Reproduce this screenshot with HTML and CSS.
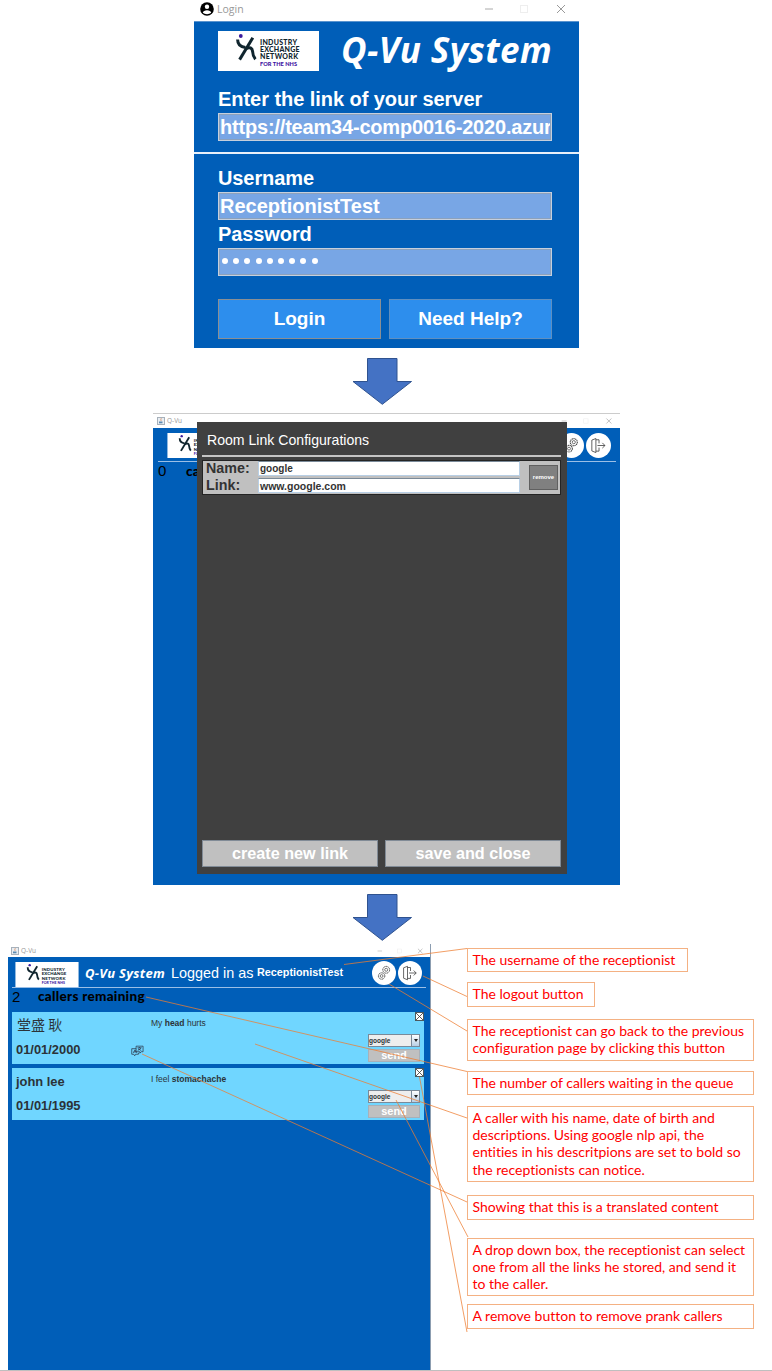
FILE: index.html
```html
<!DOCTYPE html>
<html lang="en">
<head>
<meta charset="utf-8">
<title>Q-Vu System</title>
<link rel="stylesheet" href="styles.css">
</head>
<body>
<svg class="defs" width="0" height="0">
  <symbol id="logo" viewBox="0 0 101 40">
    <rect width="101" height="40" fill="#fff"/>
    <circle cx="22.8" cy="5" r="1.9" fill="#3b1a9c"/>
    <g fill="none" stroke="#10252e" stroke-width="3">
      <path d="M19.6 8.5C19.6 13 22.5 16 27.5 16.5"/>
      <path d="M34.8 6.8L21.6 28.6"/>
      <path d="M27.5 18C32 15.5 34.3 17 34.6 20.5C34.8 24 35.4 26 37.4 28.2"/>
    </g>
    <g font-family="Lato, sans-serif" font-weight="900" font-size="7" fill="#10252e">
      <text x="42" y="13.6" textLength="37">INDUSTRY</text>
      <text x="42" y="21" textLength="39.5">EXCHANGE</text>
      <text x="42" y="28.2" textLength="38">NETWORK</text>
      <text x="42" y="34.8" font-size="5.6" fill="#3b0fa0" textLength="37">FOR THE NHS</text>
    </g>
  </symbol>
  <symbol id="gears" viewBox="0 0 24 24">
    <circle cx="12" cy="12" r="12" fill="#fff"/>
    <g fill="none" stroke="#444" stroke-width=".7">
      <circle cx="14.2" cy="8.8" r="3.4" stroke-dasharray="1.2 .5" stroke-width="1"/><circle cx="14.2" cy="8.8" r="1.5"/>
      <circle cx="9.6" cy="15" r="3.2" stroke-dasharray="1.2 .5" stroke-width="1"/><circle cx="9.6" cy="15" r="1.4"/>
    </g>
  </symbol>
  <symbol id="exit" viewBox="0 0 24 24">
    <circle cx="12" cy="12" r="12" fill="#fff"/>
    <path d="M9.5 5.3L5.6 6.8V17.2L9.5 18.8ZM9.5 6.5H12.5V10M12.5 14V17.4H9.5M11 12H18.2M15.7 9.5L18.2 12L15.7 14.5" fill="none" stroke="#444" stroke-width=".8"/>
  </symbol>
  <symbol id="java" viewBox="0 0 8 8">
    <rect x=".5" y=".5" width="7" height="7" fill="#e9eef3" stroke="#a7b1bb"/>
    <path d="M4.4 1.2C2.8 2.5 4.8 2.8 3.8 4" fill="none" stroke="#d78655" stroke-width=".8"/>
    <path d="M2 4.5H5.5V6.3H2Z" fill="#5c8ab0"/>
  </symbol>
  <symbol id="controls" viewBox="0 0 82 12">
    <path d="M1 6H9" stroke="#aaa"/><rect x="36.5" y="2.5" width="7" height="7" fill="none" stroke="#eee"/>
    <path d="M73 2L81 10M81 2L73 10" stroke="#999" fill="none"/>
  </symbol>
  <symbol id="arrow" viewBox="0 0 60 47">
    <path d="M15.500 .5H45V23.500H59.500L30.300 46.300L1 23.500H15.500Z" fill="#4472c4" stroke="#2f528f" stroke-width="1"/>
  </symbol>
</svg>
<main class="page">
  <section class="login">
    <header class="login-bar">
      <svg class="user" viewBox="0 0 14 14"><circle cx="7" cy="7" r="6.8"/><circle cx="7" cy="4.7" r="2.2" fill="#fff"/><path d="M2.8 10.8C3 7.3 11 7.3 11.2 10.8C9 12.6 5 12.6 2.800 10.800Z" fill="#fff"/></svg>
      <span>Login</span>
      <svg class="login-controls"><use href="#controls"/></svg>
    </header>
    <div class="login-top">
      <div class="brand"><svg class="logo"><use href="#logo"/></svg><h1>Q-Vu System</h1></div>
      <label class="server-label">Enter the link of your server</label>
      <div class="field"><span class="t-url">https://team34-comp0016-2020.azur</span></div>
    </div>
    <div class="login-bottom">
      <label>Username</label>
      <div class="field"><span class="t-user">ReceptionistTest</span></div>
      <label>Password</label>
      <div class="field dots"><i></i><i></i><i></i><i></i><i></i><i></i><i></i><i></i><i></i></div>
      <div class="buttons"><div class="btn focus">Login</div><div class="btn">Need Help?</div></div>
    </div>
  </section>
  <svg class="arrow"><use href="#arrow"/></svg>
  <section class="config">
    <header class="win-bar"><svg class="java"><use href="#java"/></svg><span>Q-Vu</span><svg class="win-controls"><use href="#controls"/></svg></header>
    <div class="config-head"><svg class="logo"><use href="#logo"/></svg><svg class="round"><use href="#gears"/></svg><svg class="round"><use href="#exit"/></svg></div>
    <div class="count"><span class="num">0</span><b>callers remaining</b></div>
    <div class="dialog">
      <h2>Room Link Configurations</h2>
      <div class="link-row">
        <div class="link-fields">
          <b>Name:</b><span>google</span>
          <b>Link:</b><span class="t-link">www.google.com</span>
        </div>
        <div class="remove">remove</div>
      </div>
      <footer><div class="gray-btn">create new link</div><div class="gray-btn">save and close</div></footer>
    </div>
  </section>
  <svg class="arrow second"><use href="#arrow"/></svg>
  <div class="stage">
    <section class="queue">
      <header class="win-bar"><svg class="java"><use href="#java"/></svg><span>Q-Vu</span><svg class="win-controls"><use href="#controls"/></svg></header>
      <div class="queue-head">
        <svg class="logo"><use href="#logo"/></svg>
        <span class="title">Q-Vu System</span><span class="logged">Logged in as</span><b class="who">ReceptionistTest</b>
        <svg class="round"><use href="#gears"/></svg><svg class="round"><use href="#exit"/></svg>
      </div>
      <div class="count"><span class="num">2</span><b>callers remaining</b></div>
      <article class="caller">
        <div class="person"><span class="cjk">堂盛 耿</span><b class="dob">01/01/2000</b></div>
        <svg class="translate" viewBox="0 0 14 12"><g fill="none" stroke="#223" stroke-width=".7"><path d="M5.500 3.500H.8V9.500H3L4 11.200L5 9.500H8V8M5.500 .8H13V6.800H11L9.500 8.400V6.800H5.500ZM2.500 8L4.300 4.800L6 8M3 7H5.500M7 2.500H11.500M9.200 1.700V2.500M7.200 5.500L10.800 3M7.500 3.500L11 5.500"/></g></svg>
        <p class="desc">My <b>head</b> hurts</p>
        <div class="actions"><svg class="x" viewBox="0 0 9 9"><path d="M.5 .5H8.5V8.5H.5ZM.5 .5L8.5 8.5M8.5 .5L.5 8.5" fill="#fff" stroke="#333" stroke-width=".8"/></svg><div class="select"><span>google</span><i></i></div><div class="send">send</div></div>
      </article>
      <article class="caller">
        <div class="person"><b class="name">john lee</b><b class="dob">01/01/1995</b></div>
        <p class="desc">I feel <b>stomachache</b></p>
        <div class="actions"><svg class="x" viewBox="0 0 9 9"><path d="M.5 .5H8.5V8.5H.5ZM.5 .5L8.5 8.5M8.5 .5L.5 8.5" fill="#fff" stroke="#333" stroke-width=".8"/></svg><div class="select"><span>google</span><i></i></div><div class="send">send</div></div>
      </article>
    </section>
    <aside class="notes">
      <p class="n1">The username of the receptionist</p>
      <p class="n2">The logout button</p>
      <p class="n3">The receptionist can go back to the previous<br>configuration page by clicking this button</p>
      <p class="n4">The number of callers waiting in the queue</p>
      <p class="n5">A caller with his name, date of birth and<br>descriptions. Using google nlp api, the<br>entities in his descritpions are set to bold so<br>the receptionists can notice.</p>
      <p class="n6">Showing that this is a translated content</p>
      <p class="n7">A drop down box, the receptionist can select<br>one from all the links he stored, and send it<br>to the caller.</p>
      <p class="n8">A remove button to remove prank callers</p>
    </aside>
    <svg class="connectors" viewBox="0 944 772 427"><g fill="none" stroke="#ed7d31" stroke-width=".75">
      <path d="M344 964.5L467 948.5M423 976L467 996.5M389 984L467 1031M146 997L467 1071.5M255 1044L467 1118M142 1054L467 1202M396 1100L468 1237M419.5 1077L467 1332"/>
    </g></svg>
  </div>
</main>
</body>
</html>
```
FILE: styles.css
```css
* { box-sizing: border-box; }
body { margin: 0; background: #fff; font-family: "Liberation Sans", Arial, sans-serif; }
h1, h2, p { margin: 0; }
svg { display: block; flex: none; }
.defs { position: absolute; }
.page { width: 772px; height: 1371px; overflow: hidden; display: flex; flex-direction: column; border-bottom: 1px solid #bfbfbf; }
.page > * { flex: none; }
span, b, label, h1, h2, p { white-space: nowrap; }

.login { width: 385px; height: 348px; margin-left: 194px; background: #005eb8; color: #fff; }
.login-bar { height: 22px; background: #fff; border-bottom: 1px solid #5a94cf; display: flex; align-items: flex-start; padding: 2px 13px 0 6px; }
.user { width: 14px; height: 14px; }
.login-bar span { font: 10.5px/15px "Open Sans", sans-serif; color: #999; margin-left: 3px; }
.login-controls { width: 82px; height: 12px; margin: 1px 0 0 auto; }
.login-top { height: 132px; padding: 9px 27px 0 24px; border-bottom: 2px solid #e8f0fa; }
.brand { display: flex; height: 40px; justify-content: space-between; }
.brand .logo { width: 101px; height: 40px; }
.brand h1 { font: italic 700 35px/38px "Open Sans", sans-serif; letter-spacing: 0.4px; }
label { display: block; font-weight: bold; font-size: 20px; line-height: 24px; }
.server-label { margin-top: 16px; margin-bottom: 2px; letter-spacing: -0.05px; }
.field { height: 28px; background: #78a6e5; border: 1px solid #c5cfdd; outline: 1px solid #8ba1bd; outline-offset: -2px; overflow: hidden; padding-left: 1px; font-weight: bold; font-size: 20px; line-height: 26px; }
.t-url { letter-spacing: -0.19px; }
.login-bottom { padding: 12px 27px 0 24px; }
.login-bottom label { height: 26px; line-height: 25px; letter-spacing: -0.1px; }
.login-bottom .field + label { height: 28px; line-height: 28px; }
.dots { display: flex; padding: 9px 0 0 3px; gap: 5.2px; }
.dots i { width: 6px; height: 6px; border-radius: 3px; background: #fff; }
.buttons { display: flex; gap: 8px; margin-top: 23px; }
.btn { flex: 1; height: 40px; border: 1px solid #5f8fc0; background: #2d8eed; text-align: center; font-weight: bold; font-size: 19px; line-height: 38px; }
.btn.focus { border-color: #8a8f94; }

.arrow { width: 60px; height: 47px; margin: 10px 0 8px 352px; }
.second { margin: 9px 0 3px 352px; }

.config { width: 467px; height: 472px; margin-left: 153px; background: #005eb8; position: relative; }
.win-bar { height: 15px; background: #fff; border-top: 1px solid #ccc; display: flex; align-items: center; padding: 0 8px 0 4px; }
.java { width: 8px; height: 8px; }
.win-bar span { font: 6.5px/12px "Open Sans", sans-serif; color: #999; margin-left: 2px; }
.win-controls { width: 51px; height: 8px; margin-left: auto; }
.config-head { height: 34px; margin: 0 4px 0 5px; padding: 5px 5px 0 9px; border-bottom: 1px solid #9bbfe6; display: flex; gap: 2px; }
.config .logo { width: 64px; height: 25px; margin-right: auto; }
.round { width: 25px; height: 25px; }
.count { display: flex; align-items: center; color: #000; height: 17px; padding-left: 5px; }
.num { font-size: 15px; width: 28px; }
.count b { font: 900 13.5px/16px Lato, sans-serif; letter-spacing: 0.3px; }
.dialog { position: absolute; left: 44px; top: 9px; width: 370px; height: 452px; background: #404040; display: flex; flex-direction: column; padding: 0 6px 7px 5px; }
.dialog h2 { height: 35px; border-bottom: 2px solid #c4c4c4; padding-left: 5px; color: #fff; font-weight: normal; font-size: 14.1px; line-height: 37px; }
.link-row { margin-top: 3px; height: 35px; background: #c0c0c0; border: 1px solid #242424; display: flex; padding: 0 2px 0 3px; justify-content: space-between; }
.link-fields { display: grid; grid-template-columns: 52px 262px; grid-auto-rows: 16px; row-gap: 0.5px; color: #333; align-content: center; }
.link-fields b { font-size: 14.3px; line-height: 15px; }
.link-fields span { background: #fff; border: 1px solid #b8cfe5; border-top-color: #7a8a99; font-weight: bold; font-size: 10px; line-height: 14px; padding-left: 1px; height: 15px; }
.link-fields .t-link { font-size: 10.5px; }
.remove { width: 29px; height: 25px; margin-top: 4px; background: #808080; border: 1px solid #606060; color: #fff; font-weight: bold; font-size: 6px; line-height: 23px; text-align: center; }
.dialog footer { margin-top: auto; display: flex; gap: 7px; }
.gray-btn { flex: 1; height: 27px; background: #c0c0c0; border: 1px solid #818b96; color: #fff; font-weight: bold; font-size: 16.2px; line-height: 25px; text-align: center; }

.stage { position: relative; display: flex; height: 427px; }
.queue { width: 423px; height: 426px; margin-left: 8px; background: #005eb8; border-right: 1px solid #8c9db0; }
.queue .win-bar { height: 13px; border: 0; padding: 0 7px 0 3px; }
.queue .win-controls { width: 46px; }
.queue-head { margin: 0 4px; height: 31px; padding: 4px 4px 0 3px; border-bottom: 1px solid #9bbfe6; display: flex; color: #fff; align-items: flex-start; }
.queue .logo { width: 64px; height: 25px; margin-top: 1px; }
.title { font: italic 700 13px/24px "Open Sans", sans-serif; margin-left: 6px; width: 86px; letter-spacing: 0.3px; }
.logged { font-size: 14.4px; line-height: 24px; width: 86px; }
.who { font-size: 10.8px; line-height: 23px; margin: 0 auto 0 0; }
.queue-head .round + .round { margin-left: 2px; }
.queue-head .round { width: 24px; height: 24px; }
.queue .count { height: 16px; margin-bottom: 8px; padding-left: 4px; }
.queue .num { width: 26px; }
.caller { position: relative; height: 52px; margin: 0 6px 4px 4px; background: #70d6ff; color: #2b3338; display: flex; }
.person { width: 119px; padding: 3px 0 0 4px; display: flex; flex-direction: column; }
.name, .dob { font-size: 12.9px; line-height: 22px; }
.dob { margin-top: 2px; }
.cjk { font: 14px/20px "Noto Sans CJK SC", sans-serif; margin: -1px 0 2px 1px; padding-bottom: 1px; }
.translate { width: 13px; height: 12px; margin: 33px -13px 0 0; }
.desc { font-size: 8.5px; line-height: 12px; margin: 5px 0 0 20px; }
.actions { margin-left: auto; width: 56px; display: flex; flex-direction: column; }
.x { width: 9px; height: 9px; align-self: flex-end; }
.select { width: 52px; height: 13px; margin-top: 13px; background: #eee; border: 1px solid #7a8a99; display: flex; justify-content: space-between; font-weight: bold; font-size: 6.5px; line-height: 11px; }
.select i { width: 8px; border-left: 1px solid #7a8a99; background: linear-gradient(#fff, #b8cfe5); display: flex; align-items: center; justify-content: center; }
.select i::after { content: ""; border: 2px solid transparent; border-top: 3px solid #222; border-bottom: 0; }
.send { width: 52px; height: 13px; margin-top: 2px; background: #c0c0c0; border: 1px solid #a8b0b8; color: #fff; font-weight: bold; font-size: 11px; line-height: 11px; text-align: center; }

.notes { margin: 4px 0 0 35px; width: 288px; color: #f00; font: 14px/17.2px Lato, sans-serif; font-variant-ligatures: none; }
.notes p { border: 1px solid #f4b183; padding: 2px 0 0 4.5px; width: 287px; background: #fff; margin-left: 1px; }
.notes .n1 { width: 221px; height: 24px; }
.notes .n2 { width: 128px; height: 25px; margin-top: 10px; }
.notes .n3 { height: 42px; margin-top: 12px; }
.notes .n4 { height: 24px; margin-top: 10px; }
.notes .n5 { height: 76px; margin-top: 11px; }
.notes .n6 { height: 25px; margin-top: 13px; }
.notes .n7 { height: 58px; margin-top: 18px; }
.notes .n8 { height: 25px; margin-top: 8px; }
.connectors { position: absolute; left: 0; top: 0; width: 772px; height: 427px; }
```
